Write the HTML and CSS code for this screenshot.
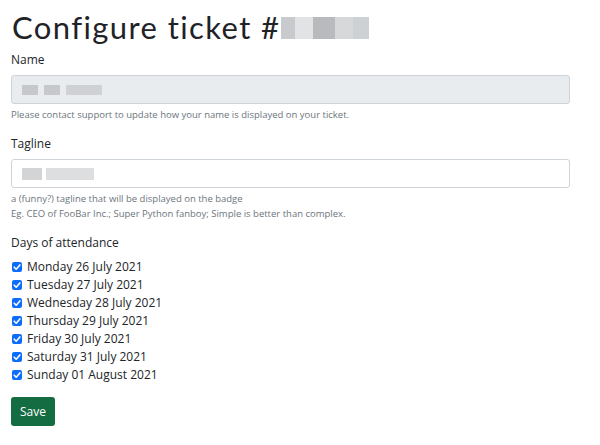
FILE: index.html
```html
<!DOCTYPE html>
<html>
<head>
<meta charset="utf-8">
<link rel="stylesheet" href="styles.css">
</head>
<body>
<main class="page">
  <h1 class="title">Configure ticket #<span class="pix pix-title"><i class="p1"></i><i class="p2"></i><i class="p3"></i><i class="p4"></i><i class="p5"></i></span></h1>

  <div class="field">
    <label class="label">Name</label>
    <div class="input input-disabled"><span class="pix pix-name"><i></i><i class="gap"></i><i></i><i class="gap"></i><i class="wide"></i></span></div>
    <div class="help">Please contact support to update how your name is displayed on your ticket.</div>
  </div>

  <div class="field">
    <label class="label">Tagline</label>
    <div class="input"><span class="pix pix-tag"><i></i><i class="gap"></i><i class="wide"></i></span></div>
    <div class="help">a (funny?) tagline that will be displayed on the badge<br>Eg. CEO of FooBar Inc.; Super Python fanboy; Simple is better than complex.</div>
  </div>

  <div class="field">
    <label class="label">Days of attendance</label>
    <ul class="checks">
      <li class="check"><span class="box"><svg viewBox="0 0 10 10"><path d="M2.2 5.2 L4.2 7.2 L7.9 2.9" /></svg></span>Monday 26 July 2021</li>
      <li class="check"><span class="box"><svg viewBox="0 0 10 10"><path d="M2.2 5.2 L4.2 7.2 L7.9 2.9" /></svg></span>Tuesday 27 July 2021</li>
      <li class="check"><span class="box"><svg viewBox="0 0 10 10"><path d="M2.2 5.2 L4.2 7.2 L7.9 2.9" /></svg></span>Wednesday 28 July 2021</li>
      <li class="check"><span class="box"><svg viewBox="0 0 10 10"><path d="M2.2 5.2 L4.2 7.2 L7.9 2.9" /></svg></span>Thursday 29 July 2021</li>
      <li class="check"><span class="box"><svg viewBox="0 0 10 10"><path d="M2.2 5.2 L4.2 7.2 L7.9 2.9" /></svg></span>Friday 30 July 2021</li>
      <li class="check"><span class="box"><svg viewBox="0 0 10 10"><path d="M2.2 5.2 L4.2 7.2 L7.9 2.9" /></svg></span>Saturday 31 July 2021</li>
      <li class="check"><span class="box"><svg viewBox="0 0 10 10"><path d="M2.2 5.2 L4.2 7.2 L7.9 2.9" /></svg></span>Sunday 01 August 2021</li>
    </ul>
  </div>

  <button class="btn">Save</button>
</main>
</body>
</html>
```
FILE: styles.css
```css
html, body { margin: 0; padding: 0; background: #fff; }
body { font-family: "Open Sans", "Noto Sans", sans-serif; color: #212529; }
.page { padding: 8px 30px 0 11px; display: flex; flex-direction: column; }
.title {
  font-family: "Lato", sans-serif;
  font-weight: 400;
  font-size: 31px;
  line-height: 38px;
  margin: 0 0 5px 1px;
  color: #1f2226;
  display: flex;
  align-items: center;
  letter-spacing: 1.4px;
}
.pix { display: inline-flex; align-items: stretch; }
.pix i { display: block; }
.pix-title { height: 22px; margin-left: 1px; margin-top: 2px; }
.pix-title .p1 { width: 14px; background: #c9cacd; }
.pix-title .p2 { width: 18px; background: #e2e3e5; }
.pix-title .p3 { width: 22px; background: #b9babd; }
.pix-title .p4 { width: 18px; background: #d6d8da; }
.pix-title .p5 { width: 16px; background: #cdd1d4; }

.field { display: flex; flex-direction: column; margin-bottom: 13px; }
.label { font-size: 12px; line-height: 18px; margin-bottom: 6px; }
.input {
  height: 27px;
  border: 1px solid #ced4da;
  border-radius: 3px;
  background: #fff;
  display: flex;
  align-items: center;
  padding-left: 10px;
}
.input-disabled { background: #e9ecef; }
.pix-name { height: 10px; }
.pix-name i { width: 16px; background: #c6c8cb; }
.pix-name i.gap { width: 6px; background: transparent; }
.pix-name i.wide { width: 36px; background: #cfd1d4; }
.pix-tag { height: 12px; }
.pix-tag i { width: 20px; background: #d2d4d6; }
.pix-tag i.gap { width: 4px; background: transparent; }
.pix-tag i.wide { width: 48px; background: #dcdee0; }
.help { font-size: 9.5px; line-height: 15px; color: #6c757d; margin-top: 3px; }

.checks { list-style: none; margin: 0; padding: 0; }
.check { display: flex; align-items: center; font-size: 12px; line-height: 18px; height: 18px; }
.box {
  width: 10px; height: 10px; border-radius: 2px;
  background: #0d6efd; margin: 0 5px 0 1px; display: flex;
}
.box svg { width: 10px; height: 10px; }
.box path { fill: none; stroke: #fff; stroke-width: 1.6; stroke-linecap: round; stroke-linejoin: round; }

.btn {
  align-self: flex-start;
  margin-top: 0;
  background: #146c43;
  color: #fff;
  border: 0;
  border-radius: 3px;
  font-family: "Open Sans", sans-serif;
  font-size: 12px;
  height: 29px;
  padding: 0 9px;
}
```
